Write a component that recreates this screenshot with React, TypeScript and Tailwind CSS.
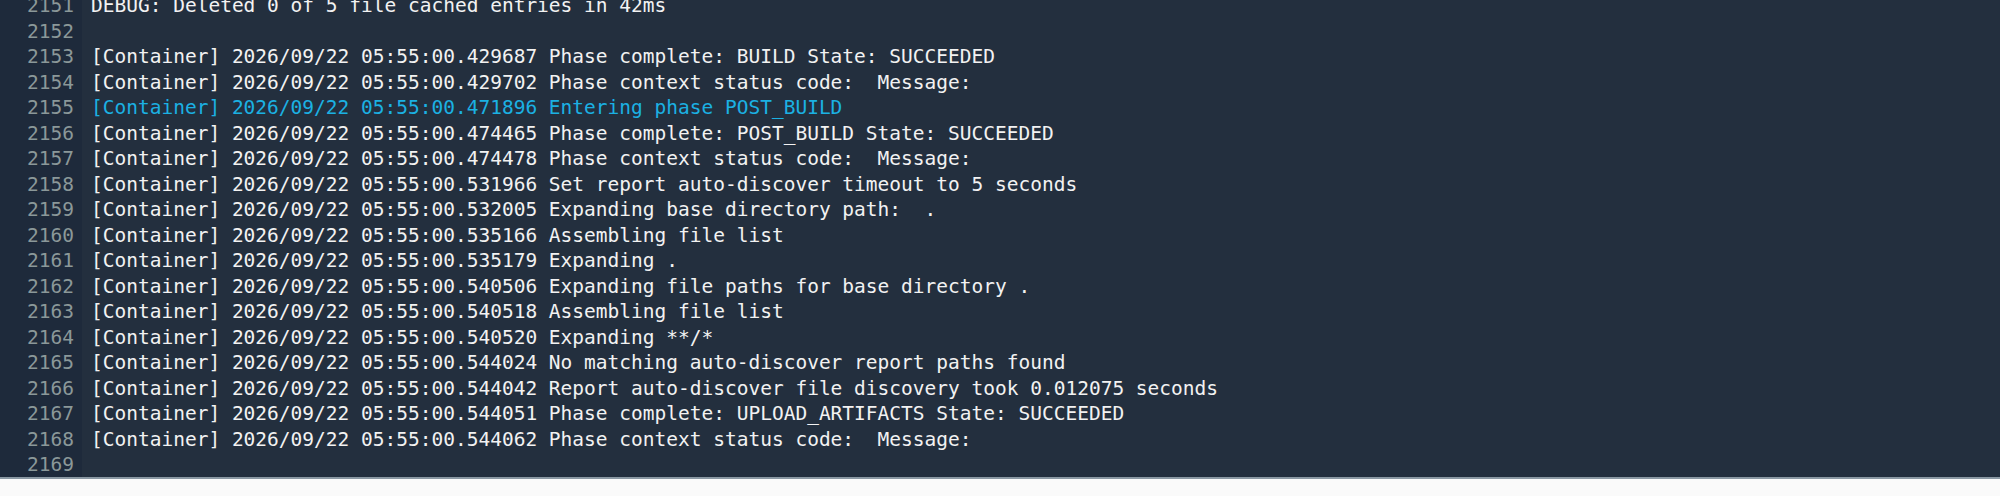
const lines: { n: number; text: string; hl?: boolean }[] = [
  { n: 2151, text: "DEBUG: Deleted 0 of 5 file cached entries in 42ms" },
  { n: 2152, text: "" },
  { n: 2153, text: "[Container] 2026/09/22 05:55:00.429687 Phase complete: BUILD State: SUCCEEDED" },
  { n: 2154, text: "[Container] 2026/09/22 05:55:00.429702 Phase context status code:  Message:" },
  { n: 2155, text: "[Container] 2026/09/22 05:55:00.471896 Entering phase POST_BUILD", hl: true },
  { n: 2156, text: "[Container] 2026/09/22 05:55:00.474465 Phase complete: POST_BUILD State: SUCCEEDED" },
  { n: 2157, text: "[Container] 2026/09/22 05:55:00.474478 Phase context status code:  Message:" },
  { n: 2158, text: "[Container] 2026/09/22 05:55:00.531966 Set report auto-discover timeout to 5 seconds" },
  { n: 2159, text: "[Container] 2026/09/22 05:55:00.532005 Expanding base directory path:  ." },
  { n: 2160, text: "[Container] 2026/09/22 05:55:00.535166 Assembling file list" },
  { n: 2161, text: "[Container] 2026/09/22 05:55:00.535179 Expanding ." },
  { n: 2162, text: "[Container] 2026/09/22 05:55:00.540506 Expanding file paths for base directory ." },
  { n: 2163, text: "[Container] 2026/09/22 05:55:00.540518 Assembling file list" },
  { n: 2164, text: "[Container] 2026/09/22 05:55:00.540520 Expanding **/*" },
  { n: 2165, text: "[Container] 2026/09/22 05:55:00.544024 No matching auto-discover report paths found" },
  { n: 2166, text: "[Container] 2026/09/22 05:55:00.544042 Report auto-discover file discovery took 0.012075 seconds" },
  { n: 2167, text: "[Container] 2026/09/22 05:55:00.544051 Phase complete: UPLOAD_ARTIFACTS State: SUCCEEDED" },
  { n: 2168, text: "[Container] 2026/09/22 05:55:00.544062 Phase context status code:  Message:" },
  { n: 2169, text: "" },
];

export default function App() {
  return (
    <div className="h-[496px] w-[2000px] bg-[#fafafa] overflow-hidden">
      <div className="h-[479px] bg-[#232f3e] overflow-hidden flex border-b-2 border-[#8a98a3]">
        <div className="w-[82px] shrink-0 bg-[#1e2a3b]">
          <div className="-mt-[7px] pr-2 text-right font-['DejaVu_Sans_Mono',monospace] text-[19.5px] leading-[25.5px] text-[#8b9899]">
            {lines.map((l) => (
              <div key={l.n}>{l.n}</div>
            ))}
          </div>
        </div>
        <div className="flex-1 pl-[9px]">
          <div className="-mt-[7px] font-['DejaVu_Sans_Mono',monospace] text-[19.5px] leading-[25.5px] whitespace-pre">
            {lines.map((l) => (
              <div
                key={l.n}
                className={l.hl ? "text-[#1bb1e3]" : "text-[#f2f2f2]"}
              >
                {l.text || " "}
              </div>
            ))}
          </div>
        </div>
      </div>
    </div>
  );
}
